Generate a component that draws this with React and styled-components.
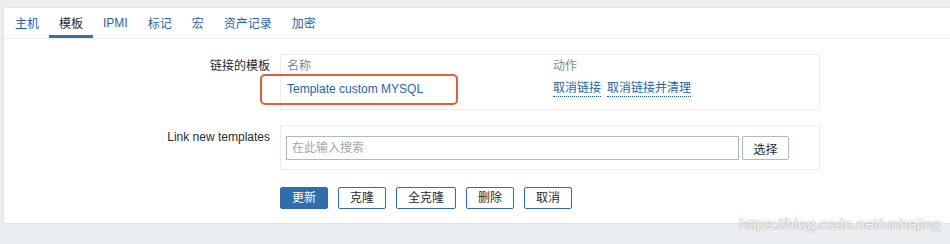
import React from 'react';
import styled, { createGlobalStyle } from 'styled-components';

const GlobalStyle = createGlobalStyle`
  html, body {
    margin: 0;
    padding: 0;
    background: #ebeef0;
    overflow: hidden;
  }
  body {
    font-family: "Liberation Sans", "Noto Sans CJK SC", Arial, sans-serif;
    font-size: 12px;
    color: #1f2c33;
  }
`;

const tabs = ['主机', '模板', 'IPMI', '标记', '宏', '资产记录', '加密'];
const actions = ['更新', '克隆', '全克隆', '删除', '取消'];

const App = () => {
  return (
    <Page>
      <GlobalStyle />
      <Panel>
        <TabBar>
          {tabs.map((tab) => (
            <Tab key={tab} active={tab === '模板'}>
              {tab}
            </Tab>
          ))}
        </TabBar>
        <Form>
          <Label>链接的模板</Label>
          <Box>
            <LinkedTable>
              <HeaderCell>名称</HeaderCell>
              <HeaderCell>动作</HeaderCell>
              <NameCell>
                <Highlight />
                <NameLink>Template custom MYSQL</NameLink>
              </NameCell>
              <ActionCell>
                <DottedLink>取消链接</DottedLink>
                <DottedLink>取消链接并清理</DottedLink>
              </ActionCell>
            </LinkedTable>
          </Box>

          <Label>Link new templates</Label>
          <Box pad='10px 30px 9px 5px'>
            <SearchRow>
              <SearchInput placeholder='在此输入搜索' />
              <SelectButton>选择</SelectButton>
            </SearchRow>
          </Box>

          <span />
          <ButtonRow>
            {actions.map((label, i) => (
              <ActionButton key={label} primary={i === 0}>
                {label}
              </ActionButton>
            ))}
          </ButtonRow>
        </Form>
      </Panel>
      <Watermark>https://blog.csdn.net/unhejing</Watermark>
    </Page>
  );
};

const Page = styled.div`
  position: relative;
  height: 244px;
  padding: 7px 0 0 3px;
  box-sizing: border-box;
  overflow: hidden;
`;

const Panel = styled.div`
  background: #fff;
  border: 1px solid #dfe4e7;
  border-right: none;
  padding-bottom: 14px;
`;

const TabBar = styled.div`
  display: flex;
  height: 30px;
  border-bottom: 1px solid #ebeef0;
`;

const Tab = styled.div`
  display: flex;
  align-items: center;
  padding: 0 10px;
  height: 30px;
  box-sizing: border-box;
  padding-top: 2px;
  font-size: 12px;
  color: ${(p) => (p.active ? '#1f2c33' : '#1f65a6')};
  border-bottom: 3px solid ${(p) => (p.active ? '#3a6ea2' : 'transparent')};
  &:first-child {
    padding-left: 11px;
  }
`;

const Form = styled.div`
  display: grid;
  grid-template-columns: 266px 540px;
  column-gap: 10px;
  row-gap: 15px;
  padding-top: 15px;
`;

const Label = styled.div`
  text-align: right;
  padding-top: 5px;
  line-height: 14px;
  color: #1f2c33;
`;

const Box = styled.div`
  border: 1px solid #ebeef0;
  padding: ${(p) => p.pad || '0 6px 8px'};
`;

const LinkedTable = styled.div`
  display: grid;
  grid-template-columns: 266px 1fr;
`;

const HeaderCell = styled.div`
  height: 22px;
  line-height: 22px;
  color: #768d99;
`;

const NameCell = styled.div`
  position: relative;
  height: 24px;
  line-height: 24px;
`;

const ActionCell = styled.div`
  display: flex;
  gap: 6px;
  height: 24px;
  line-height: 24px;
`;

const NameLink = styled.span`
  color: #1f65a6;
  font-size: 12px;
`;

const DottedLink = styled.span`
  color: #1f65a6;
  line-height: 15px;
  align-self: center;
  border-bottom: 1px dotted #1f65a6;
`;

const Highlight = styled.div`
  position: absolute;
  left: -27px;
  top: -3px;
  width: 198px;
  height: 31px;
  box-sizing: border-box;
  border: 2px solid #e0603a;
  border-radius: 5px;
`;

const SearchRow = styled.div`
  display: flex;
  gap: 3px;
`;

const SearchInput = styled.input`
  width: 453px;
  height: 24px;
  box-sizing: border-box;
  border: 1px solid #acbbc2;
  padding: 0 5px;
  font-family: inherit;
  font-size: 12px;
  color: #1f2c33;
  outline: none;
  &::placeholder {
    color: #a1a8ad;
  }
`;

const SelectButton = styled.button`
  width: 47px;
  height: 24px;
  box-sizing: border-box;
  border: 1px solid #acbbc2;
  border-radius: 2px;
  background: #fff;
  font-family: inherit;
  font-size: 12px;
  color: #1f2c33;
  padding: 0;
`;

const ButtonRow = styled.div`
  display: flex;
  gap: 10px;
  padding-top: 2px;
`;

const ActionButton = styled.button`
  height: 22px;
  padding: 0 11px;
  box-sizing: border-box;
  border: 1px solid #2f6ea9;
  border-radius: 2px;
  background: ${(p) => (p.primary ? '#2f6ea9' : '#fff')};
  color: ${(p) => (p.primary ? '#fff' : '#1f2c33')};
  font-family: inherit;
  font-size: 12px;
  line-height: 20px;
`;

const Watermark = styled.div`
  position: absolute;
  right: 9px;
  top: 215px;
  font-family: "Liberation Sans", Arial, sans-serif;
  font-size: 15.5px;
  color: rgba(255, 255, 255, 0.95);
  text-shadow: 0 0 1px rgba(0, 0, 0, 0.35), 0 0 2px rgba(0, 0, 0, 0.2);
`;

export default App;
